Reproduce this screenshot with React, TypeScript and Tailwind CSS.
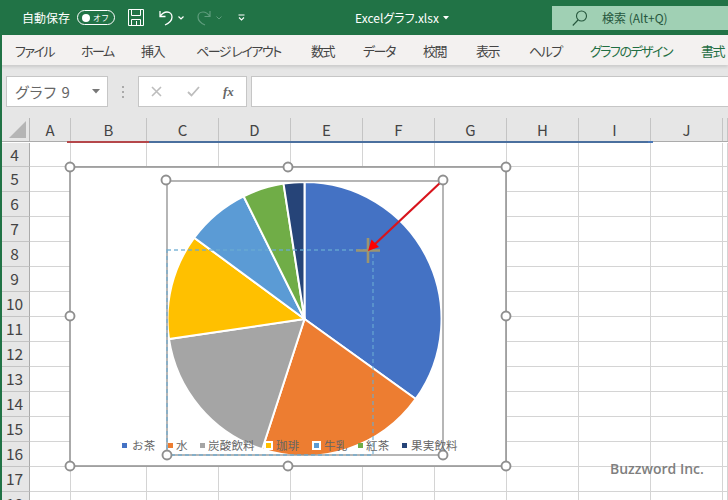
const jp = '"Noto Sans CJK JP", sans-serif';

const tabs = [
  { label: "ファイル", w: "w-[66px]", green: false },
  { label: "ホーム", w: "w-[60px]", green: false },
  { label: "挿入", w: "w-[55px]", green: false },
  { label: "ページ レイアウト", w: "w-[115px]", green: false },
  { label: "数式", w: "w-[52px]", green: false },
  { label: "データ", w: "w-[60px]", green: false },
  { label: "校閲", w: "w-[53px]", green: false },
  { label: "表示", w: "w-[53px]", green: false },
  { label: "ヘルプ", w: "w-[61px]", green: false },
  { label: "グラフのデザイン", w: "w-[111px]", green: true },
  { label: "書式", w: "w-[40px]", green: true },
];

const columns = [
  { label: "A", w: "w-[41px]" },
  { label: "B", w: "w-[76px]" },
  { label: "C", w: "w-[72px]" },
  { label: "D", w: "w-[72px]" },
  { label: "E", w: "w-[72px]" },
  { label: "F", w: "w-[72px]" },
  { label: "G", w: "w-[72px]" },
  { label: "H", w: "w-[72px]" },
  { label: "I", w: "w-[72px]" },
  { label: "J", w: "w-[72px]" },
  { label: "", w: "w-[5px]" },
];

const rows = [4, 5, 6, 7, 8, 9, 10, 11, 12, 13, 14, 15, 16, 17, 18];

const cx = 304.5;
const cy = 319;
const r = 137;
const slices = [
  { end: 125.7, color: "#4472c4" },
  { end: 198, color: "#ed7d31" },
  { end: 261.6, color: "#a5a5a5" },
  { end: 306.4, color: "#ffc000" },
  { end: 333.6, color: "#5b9bd5" },
  { end: 351.2, color: "#70ad47" },
  { end: 360, color: "#264478" },
];

const legend = [
  { label: "お茶", color: "bg-[#4472c4]", w: "w-[46px]", ring: false, gap: "ml-[5px]" },
  { label: "水", color: "bg-[#ed7d31]", w: "w-[32px]", ring: false, gap: "ml-[3px]" },
  { label: "炭酸飲料", color: "bg-[#a5a5a5]", w: "w-[66px]", ring: false, gap: "ml-[3px]" },
  { label: "珈琲", color: "bg-[#ffc000]", w: "w-[48px]", ring: true, gap: "ml-[5px]" },
  { label: "牛乳", color: "bg-[#5b9bd5]", w: "w-[44px]", ring: true, gap: "ml-[5px]" },
  { label: "紅茶", color: "bg-[#70ad47]", w: "w-[44px]", ring: false, gap: "ml-[3px]" },
  { label: "果実飲料", color: "bg-[#264478]", w: "w-[60px]", ring: false, gap: "ml-[4px]" },
];

const handles = [
  [70, 167], [288, 167], [506, 167], [70, 316], [506, 316], [70, 466], [288, 466], [506, 466],
  [166, 180], [443, 180], [167, 455], [443, 455],
];

function point(deg: number) {
  const a = (deg * Math.PI) / 180;
  return `${cx + r * Math.sin(a)} ${cy - r * Math.cos(a)}`;
}

function slicePath(start: number, end: number) {
  const large = end - start > 180 ? 1 : 0;
  return `M${cx} ${cy}L${point(start)}A${r} ${r} 0 ${large} 1 ${point(end)}Z`;
}

function TitleBar() {
  return (
    <div className="flex h-[35px] items-center bg-[#217346] text-white">
      <span className="ml-[22px] w-[55px] text-[12px] leading-none [font-feature-settings:'palt']">自動保存</span>
      <div className="flex h-[15px] w-[38px] items-center justify-between rounded-full border border-white pl-[4px] pr-[5px]">
        <span className="size-[8px] rounded-full bg-white" />
        <span className="text-[8px] leading-none">オフ</span>
      </div>
      <svg className="ml-[13px]" width="16" height="17" viewBox="0 0 16 17" fill="none" stroke="#fff" strokeWidth="1">
        <path d="M.5.5h15v16H.5zM3.5.5v6h9v-6M3.5 16.5v-6h9v6M8.5 12v4" />
      </svg>
      <svg className="ml-[14px]" width="16" height="16" viewBox="0 0 16 16" fill="none" stroke="#fff" strokeWidth="1.3">
        <path d="M2 1v5.500h5.500M2 6.500C4 3.500 6 2 9 2c3 0 5 2.200 5 5 0 3-2.500 6-7 8" />
      </svg>
      <svg className="ml-[3px]" width="8" height="6" viewBox="0 0 8 6" fill="none" stroke="#fff" strokeWidth="1.200">
        <path d="M1.500 1.500 4 4l2.500-2.500" />
      </svg>
      <svg className="ml-[11px]" width="16" height="16" viewBox="0 0 16 16" fill="none" stroke="#5f9d7d" strokeWidth="1.200">
        <path d="M14 1v5.500H8.500M14 6.500C12 3.500 10 2 7 2 4 2 2 4.200 2 7c0 3 2.500 6 7 8" />
      </svg>
      <svg className="ml-[3px]" width="8" height="6" viewBox="0 0 8 6" fill="none" stroke="#5f9d7d" strokeWidth="1">
        <path d="M1.500 1.500 4 4l2.500-2.500" />
      </svg>
      <svg className="ml-[15px]" width="7" height="7" viewBox="0 0 7 7" fill="none" stroke="#fff" strokeWidth="1.100">
        <path d="M.5 1h6M1 3.500 3.500 6 6 3.500" />
      </svg>
      <span className="ml-[110px] w-[82px] whitespace-nowrap text-[12px] leading-none [font-feature-settings:'palt']">
        Excelグラフ.xlsx
      </span>
      <svg className="ml-[6px]" width="6" height="4" viewBox="0 0 6 4" fill="#fff">
        <path d="M0 0h6L3 3.500z" />
      </svg>
      <div className="ml-[103px] flex h-[24px] w-[176px] items-center bg-[#a0d0b4] text-[#26573d]">
        <svg className="ml-[20px]" width="16" height="16" viewBox="0 0 16 16" fill="none" stroke="currentColor" strokeWidth="1.100">
          <circle cx="9.500" cy="6" r="5" />
          <path d="M6 10 .8 15.500" />
        </svg>
        <span className="ml-[14px] text-[12px] leading-none [font-feature-settings:'palt']">検索 (Alt+Q)</span>
      </div>
    </div>
  );
}

function Ribbon() {
  return (
    <div className="relative flex h-[30px] items-center overflow-hidden bg-[#f3f1f0] pl-[15px] shadow-[0_2px_3px_rgba(0,0,0,0.12)]">
      {tabs.map((t) => (
        <span
          key={t.label}
          className={`${t.w} shrink-0 whitespace-nowrap text-[13px] leading-none tracking-[-1.500px] [font-feature-settings:'palt'] ${t.green ? "text-[#1f6e43]" : "text-[#444444]"}`}
        >
          {t.label}
        </span>
      ))}
    </div>
  );
}

function FormulaBar() {
  return (
    <div className="flex h-[53px] items-start bg-[#e6e6e6] pt-[11px]">
      <div className="ml-[6px] flex h-[31px] w-[102px] items-center border border-[#c6c6c6] bg-white pl-[8px] pr-[7px] text-[15px] leading-none tracking-[1px] text-[#666666]">
        <span className="grow [font-feature-settings:'palt']">グラフ 9</span>
        <svg width="8" height="5" viewBox="0 0 8 5" fill="#777777">
          <path d="M0 0h8L4 4.500z" />
        </svg>
      </div>
      <svg className="ml-[14px] mt-[10px]" width="3" height="12" viewBox="0 0 3 12" fill="#aaaaaa">
        <path d="M0 0h2v2H0zM0 5h2v2H0zM0 10h2v2H0z" />
      </svg>
      <div className="ml-[13px] flex h-[31px] w-[109px] items-center border border-[#c6c6c6] bg-white">
        <svg className="ml-[12px]" width="11" height="11" viewBox="0 0 11 11" stroke="#bdbdbd" strokeWidth="1.600">
          <path d="m1 1 9 9M10 1l-9 9" />
        </svg>
        <svg className="ml-[25px]" width="13" height="11" viewBox="0 0 13 11" fill="none" stroke="#bdbdbd" strokeWidth="1.800">
          <path d="m1 6 3.500 3.500L12 1" />
        </svg>
        <span className="ml-[23px] font-['Liberation_Serif',serif] text-[13px] font-bold italic leading-none text-[#666666]">fx</span>
      </div>
      <div className="ml-[4px] h-[31px] grow border border-r-0 border-[#c6c6c6] bg-white" />
    </div>
  );
}

function SheetHeader() {
  return (
    <>
      <div className="flex h-[23px] bg-[#e6e6e6]">
        <div className="flex w-[30px] shrink-0 items-end justify-end border-r border-[#b5b5b5] pb-[3px] pr-[3px]">
          <svg width="17" height="17" viewBox="0 0 17 17" fill="#b5b5b5">
            <path d="M17 0v17H0z" />
          </svg>
        </div>
        {columns.map((c) => (
          <div
            key={c.label}
            className={`${c.w} flex shrink-0 items-center justify-center border-r border-[#c4c4c4] text-[15px] leading-none text-[#444444]`}
          >
            {c.label}
          </div>
        ))}
      </div>
      <div className="flex h-[2px] items-start bg-white">
        <div className="h-[1px] w-[67px] shrink-0 bg-[#ababab]" />
        <div className="h-[2px] w-[5px] shrink-0 bg-[#b5474a]" />
        <div className="h-[1.500px] w-[72px] shrink-0 bg-[#b5474a]" />
        <div className="h-[2px] w-[5px] shrink-0 bg-[#b5474a]" />
        <div className="h-[1.500px] w-[499px] shrink-0 bg-[#4a6f9e]" />
        <div className="h-[2px] w-[5px] shrink-0 bg-[#4a78b8]" />
        <div className="h-[1px] grow bg-[#ababab]" />
      </div>
    </>
  );
}

function Cells() {
  return (
    <div>
      {rows.map((row) => (
        <div key={row} className={`flex ${row === 4 ? "h-[24px]" : "h-[25px]"}`}>
          <div className="flex w-[30px] shrink-0 items-center justify-center border-r border-b border-[#c4c4c4] border-r-[#ababab] bg-[#e6e6e6] text-[15.500px] leading-none text-[#444444]">
            {row}
          </div>
          {columns.map((c) => (
            <div key={c.label} className={`${c.w} shrink-0 border-r border-b border-[#d4d4d4] bg-white`} />
          ))}
        </div>
      ))}
    </div>
  );
}

function Chart() {
  let start = 0;
  return (
    <>
      <svg className="absolute left-0 top-0" width="728" height="500" viewBox="0 0 728 500">
        <rect x="70" y="167" width="436" height="299" fill="#fff" stroke="#8f8f8f" strokeWidth="1.500" />
        {slices.map((s) => {
          const d = slicePath(start, s.end);
          start = s.end;
          return <path key={s.color} d={d} fill={s.color} stroke="#fff" strokeWidth="2" />;
        })}
        <rect x="167" y="181" width="276" height="274" fill="none" stroke="#8f8f8f" strokeWidth="1.300" />
        <rect x="167" y="250" width="206" height="205" fill="none" stroke="#6aaad2" strokeWidth="1.300" strokeDasharray="4 3" opacity="0.85" />
        <path d="M356 250.500h24M368 238v25" stroke="#9c9570" strokeWidth="2.600" />
        <path d="M441.500 181.500 374 245" stroke="#d8141c" strokeWidth="2.200" />
        <path d="M368 251 371.500 239.500 379 247z" fill="#ff0000" />
        {handles.map(([x, y]) => (
          <circle key={`${x}-${y}`} cx={x} cy={y} r="4.500" fill="#fff" stroke="#8f8f8f" strokeWidth="1.900" />
        ))}
      </svg>
      <div className="absolute left-[122px] top-[437px] flex h-[17px] items-center text-[11.500px] leading-none tracking-[0.2px] text-[#666666]">
        {legend.map((l) => (
          <div key={l.label} className={`${l.w} flex shrink-0 items-center whitespace-nowrap`}>
            <span className={`size-[5px] shrink-0 ${l.color} ${l.ring ? "ring-2 ring-white" : ""}`} />
            <span className={l.gap}>{l.label}</span>
          </div>
        ))}
      </div>
      <div className="absolute left-[610px] top-[459px] font-['Open_Sans',sans-serif] text-[14px] font-semibold leading-[20px] text-[#7f7f7f]">
        Buzzword Inc.
      </div>
    </>
  );
}

export default function App() {
  return (
    <div className="relative h-[500px] w-[728px] overflow-hidden bg-white" style={{ fontFamily: jp }}>
      <TitleBar />
      <Ribbon />
      <FormulaBar />
      <SheetHeader />
      <Cells />
      <div className="absolute bottom-0 left-0 top-[35px] w-[2px] bg-[#217346]" />
      <Chart />
    </div>
  );
}
